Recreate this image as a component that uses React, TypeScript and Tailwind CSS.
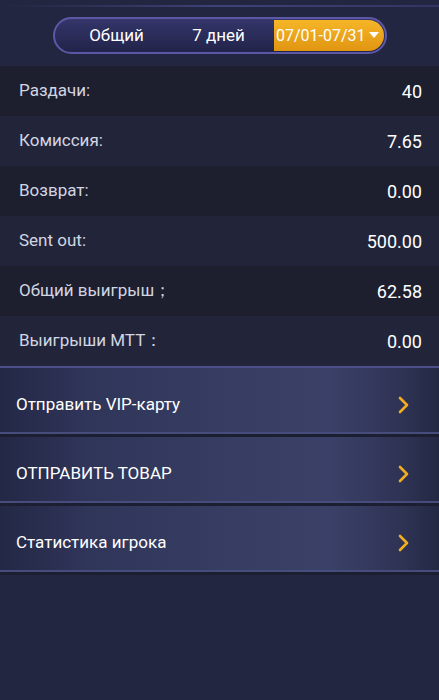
import React from "react";

const stats = [
	{ label: "Раздачи:", value: "40" },
	{ label: "Комиссия:", value: "7.65" },
	{ label: "Возврат:", value: "0.00" },
	{ label: "Sent out:", value: "500.00" },
	{ label: "Общий выигрыш；", value: "62.58" },
	{ label: "Выигрыши MTT：", value: "0.00" },
];

const actions = ["Отправить VIP-карту", "ОТПРАВИТЬ ТОВАР", "Статистика игрока"];

const Chevron = () => (
	<svg width="14" height="20" viewBox="0 0 14 20" fill="none">
		<path
			d="M3 3 L10 10 L3 17"
			stroke="#f2ad22"
			strokeWidth="2.6"
			strokeLinecap="round"
			strokeLinejoin="round"
		/>
	</svg>
);

const App = () => {
	return (
		<div
			className="w-[439px] h-[700px] bg-[#222640] text-white overflow-hidden"
			style={{ fontFamily: "Roboto, 'Liberation Sans', sans-serif" }}
		>
			{/* top divider */}
			<div className="h-[5px]" />
			<div className="h-[2px] bg-gradient-to-r from-[#222640] via-[#3f4278] to-[#333562]" />

			{/* tabs */}
			<div className="flex justify-center pt-[10px] pb-[12px]">
				<div className="flex items-center w-[334px] h-[37px] rounded-full border-2 border-[#5d58a6] bg-gradient-to-b from-[#34356a] to-[#22244a] p-[1px]">
					<div className="flex-1 flex items-center justify-center text-[17px] pl-[10px] whitespace-nowrap">Общий</div>
					<div className="flex-1 flex items-center justify-center text-[17px] pr-[4px] whitespace-nowrap">7 дней</div>
					<div className="w-[110px] h-full flex items-center justify-end gap-[3px] pr-[5px] rounded-r-full bg-gradient-to-b from-[#f6b628] to-[#e09510] text-[16px] whitespace-nowrap">
						<span className="shrink-0">07/01-07/31</span>
						<svg className="shrink-0" width="10" height="7" viewBox="0 0 10 7">
							<path d="M0 0 L10 0 L5 6 Z" fill="#ffffff" />
						</svg>
					</div>
				</div>
			</div>

			{/* stats */}
			<div className="flex flex-col">
				{stats.map((s, i) => (
					<div
						key={s.label}
						className={`flex items-center justify-between h-[50px] pl-[19px] pr-[17px] ${
							i % 2 === 0 ? "bg-[#1d1f2f]" : "bg-[#22253a]"
						}`}
					>
						<span className="text-[17px] text-[#d2d5e2]">{s.label}</span>
						<span className="text-[18px] text-white">{s.value}</span>
					</div>
				))}
			</div>
			<div className="h-[2px] bg-[#4b4f8a]" />

			{/* actions */}
			<div className="flex flex-col">
				{actions.map((a) => (
					<div key={a} className="flex flex-col">
						<div className="flex items-center justify-between h-[64px] pt-[9px] pl-[16px] pr-[28px] bg-[linear-gradient(90deg,#232846_0%,#30355a_20%,#383d63_55%,#3b4068_75%,#2e3354_92%,#232843_100%)] text-[17px]">
							<span>{a}</span>
							<Chevron />
						</div>
						<div className="h-[2px] bg-[#464c7c]" />
						<div className="h-[3px] bg-[#1c1f31]" />
					</div>
				))}
			</div>
		</div>
	);
};

export default App;
